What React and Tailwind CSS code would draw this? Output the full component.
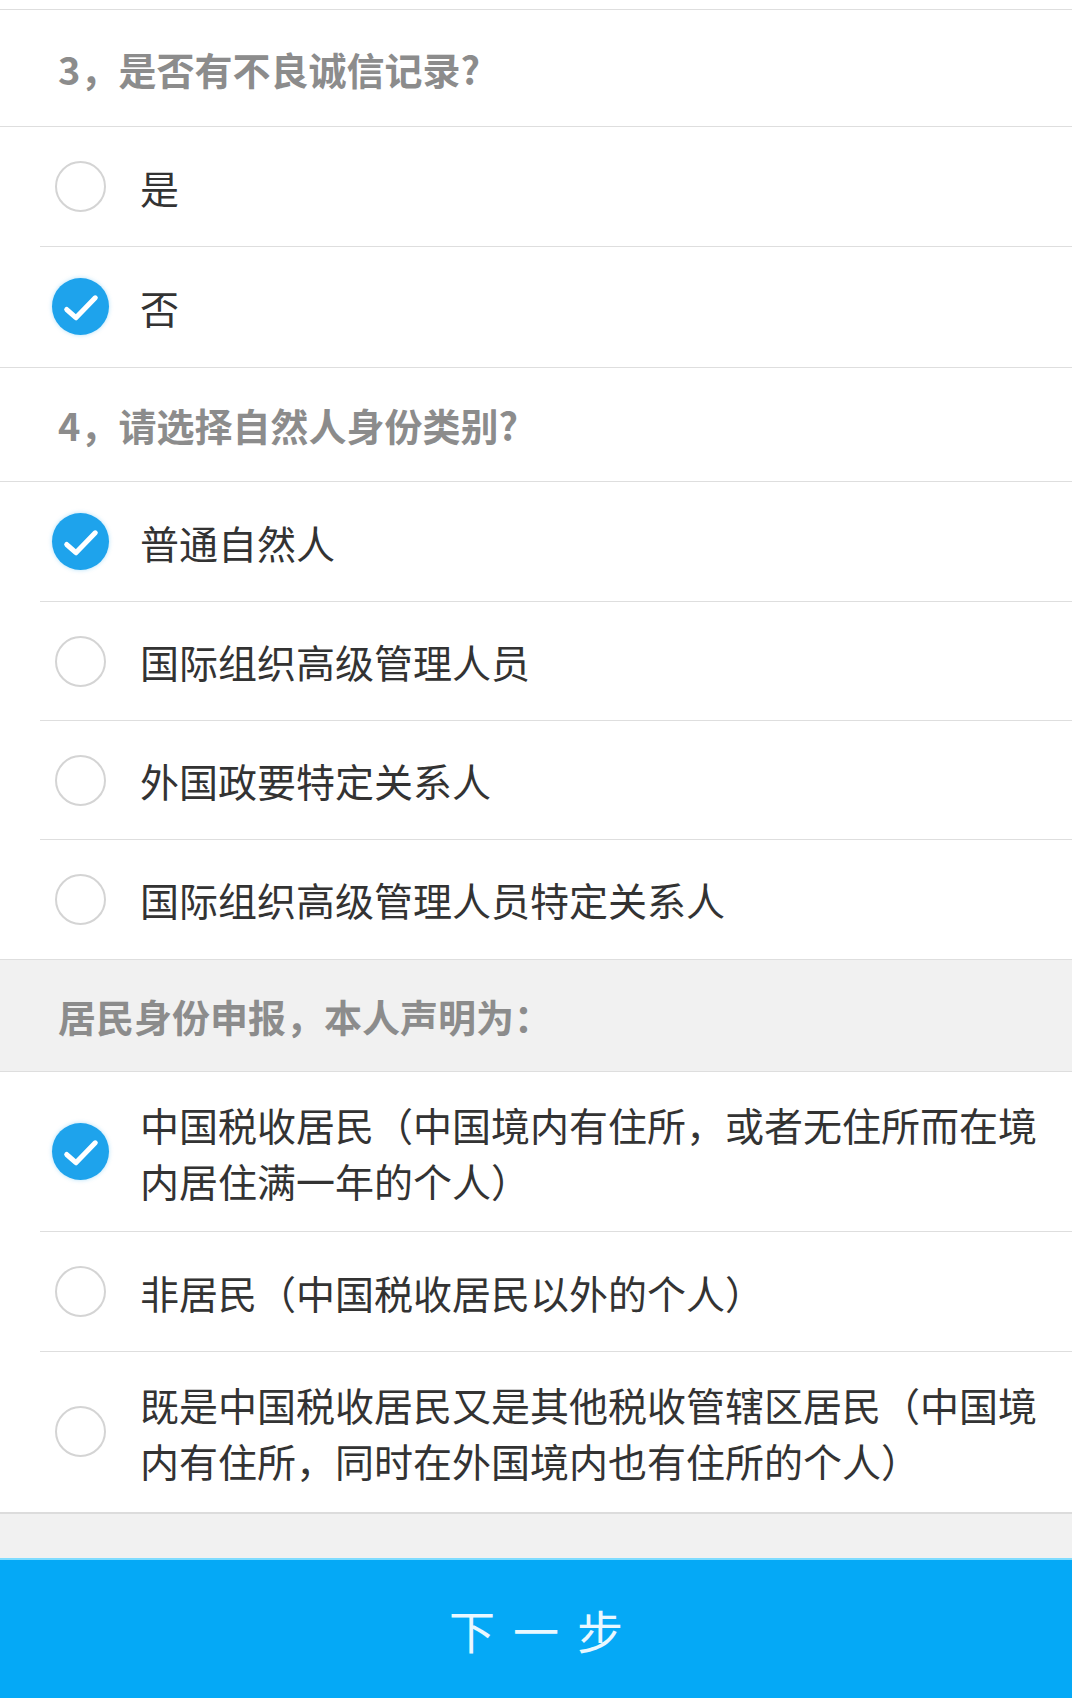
const font = { fontFamily: '"Noto Sans CJK SC", "Noto Sans", sans-serif' };

function Radio({ checked }) {
  return (
    <div className="w-[58px] h-[58px] shrink-0 flex items-center justify-center">
      {checked ? (
        <div className="w-[57px] h-[57px] rounded-full bg-[#1ea3ec] shadow-[0_0_4px_rgba(30,163,236,0.35)]">
          <svg width="57" height="57" viewBox="0 0 56 56" fill="none">
            <path d="M14.5 31 L23.5 39 L42.5 19.5" stroke="#fff" strokeWidth="5" strokeLinecap="round" strokeLinejoin="round" />
          </svg>
        </div>
      ) : (
        <div className="w-[51px] h-[51px] rounded-full border-2 border-[#d4d4d4] bg-white" />
      )}
    </div>
  );
}

function Header({ children, gray, first }) {
  return (
    <div className={`flex items-center pl-[58px] border-b border-[#dedede] font-bold text-[38px] text-[#8c8c8c] ${gray ? 'bg-[#f1f1f1] h-[112px]' : first ? 'bg-white h-[117px]' : 'bg-white h-[114px]'}`}>
      {children}
    </div>
  );
}

function Option({ label, checked, last, tall, short }) {
  const height = tall ? 'min-h-[160px] py-[20px]' : short ? 'h-[119px]' : 'h-[120px]';
  return (
    <div className={`ml-[40px] flex items-center border-b ${last ? 'border-transparent' : 'border-[#dedede]'} ${height}`}>
      <div className="pl-[11px] flex items-center">
        <Radio checked={checked} />
      </div>
      <div className="ml-[31px] pr-[20px] text-[39px] leading-[56px] text-[#333]">{label}</div>
    </div>
  );
}

export default function App() {
  return (
    <div className="w-[1072px] h-[1698px] bg-white flex flex-col overflow-hidden" style={font}>
      <div className="h-[10px] border-b border-[#dedede] bg-white" />
      <Header first>3，是否有不良诚信记录?</Header>
      <Option label="是" />
      <Option label="否" checked last />
      <div className="border-b border-[#dedede]" />
      <Header>4，请选择自然人身份类别?</Header>
      <Option label="普通自然人" checked />
      <Option label="国际组织高级管理人员" short />
      <Option label="外国政要特定关系人" short />
      <Option label="国际组织高级管理人员特定关系人" short last />
      <div className="border-b border-[#dedede]" />
      <Header gray>居民身份申报，本人声明为：</Header>
      <Option label="中国税收居民（中国境内有住所，或者无住所而在境内居住满一年的个人）" checked tall />
      <Option label="非居民（中国税收居民以外的个人）" />
      <Option label="既是中国税收居民又是其他税收管辖区居民（中国境内有住所，同时在外国境内也有住所的个人）" tall last />
      <div className="border-b-2 border-[#dcdcdc]" />
      <div className="flex-1 bg-[#f1f1f1]" />
      <div className="h-[140px] shrink-0 bg-[#05a9f6] border-t-2 border-[#7fdcff] flex items-center justify-center">
        <span className="text-[46px] text-[#eaf8ff] tracking-[18px] pl-[18px]">下一步</span>
      </div>
    </div>
  );
}
